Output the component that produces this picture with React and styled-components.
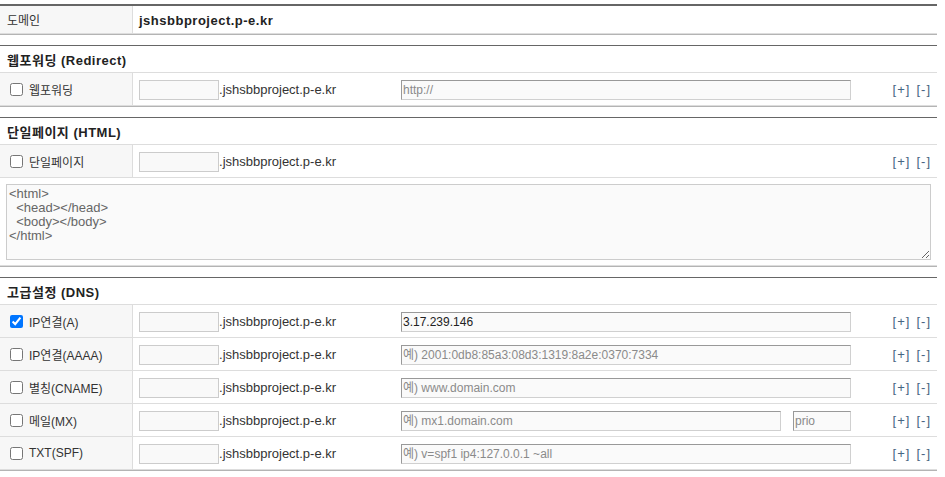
import React from "react";
import styled, { createGlobalStyle } from "styled-components";

const GlobalStyle = createGlobalStyle`
  html, body {
    margin: 0;
    padding: 0;
    background: #fff;
  }
  body {
    font-family: "Liberation Sans", "Noto Sans CJK KR", sans-serif;
    font-size: 12px;
    color: #333;
  }
`;

const Page = styled.div`
  width: 937px;
  padding-top: 4px;
`;

const Section = styled.div`
  border-top: ${(p) => (p.$thick ? "2px" : "1px")} solid #666;
  border-bottom: 1px solid #b4b4b4;
  margin-bottom: 10px;
`;

const SectionHeader = styled.div`
  height: 26px;
  display: flex;
  align-items: center;
  padding-left: 7px;
  border-bottom: 1px solid #ddd;
  font-size: 13px;
  font-weight: bold;
  letter-spacing: 0.5px;
  color: #222;
`;

const Row = styled.div`
  display: grid;
  grid-template-columns: 133px 1fr;
  height: ${(p) => p.$height || 32}px;
  border-bottom: 1px solid #ddd;
`;

const LabelCell = styled.label`
  display: flex;
  align-items: center;
  padding-left: ${(p) => (p.$plain ? 7 : 0)}px;
  background: #f7f7f7;
  border-right: 1px solid #ddd;
  font-size: 12px;
  color: #333;
`;

const Check = styled.input.attrs({ type: "checkbox" })`
  width: 13px;
  height: 13px;
  margin: 0 6px 0 10px;
`;

const ValueCell = styled.div`
  display: flex;
  align-items: center;
  padding: 1px 6px 0 6px;
`;

const DomainText = styled.span`
  font-size: 13px;
  font-weight: bold;
  letter-spacing: 0.5px;
  color: #222;
`;

const SubGroup = styled.div`
  display: flex;
  align-items: center;
  width: 262px;
  flex-shrink: 0;
`;

const SubInput = styled.input`
  box-sizing: border-box;
  width: 80px;
  height: 20px;
  padding: 0 2px;
  border: 1px solid #ccc;
  background: #f9f9f9;
  font-family: inherit;
  font-size: 12px;
  outline: none;
`;

const Suffix = styled.span`
  font-size: 13px;
  color: #333;
`;

const Field = styled.input`
  box-sizing: border-box;
  width: ${(p) => p.$width}px;
  height: 20px;
  padding: 0 1px;
  margin-right: ${(p) => p.$gap || 0}px;
  border: 1px solid;
  border-color: #999 #d0d0d0 #d0d0d0 #999;
  background: #fafafa;
  font-family: "Liberation Sans", "Noto Sans CJK KR", sans-serif;
  font-size: 12px;
  color: #222;
  outline: none;

  &::placeholder {
    color: #8a8a8a;
  }
`;

const Actions = styled.div`
  margin-left: auto;
  display: flex;
  gap: 6px;
`;

const ActionLink = styled.span`
  font-size: 13px;
  letter-spacing: 1px;
  color: #476582;
  cursor: pointer;
`;

const EditorCell = styled.div`
  padding: 6px;
  height: 88px;
  box-sizing: border-box;
  border-bottom: 1px solid #ddd;
`;

const CodeArea = styled.textarea`
  display: block;
  box-sizing: border-box;
  width: 100%;
  height: 76px;
  margin: 0;
  padding: 2px 2px;
  border: 1px solid #ccc;
  background: #fafafa;
  font-family: "Liberation Sans", sans-serif;
  font-size: 13px;
  line-height: 14px;
  color: #666;
  outline: none;
  resize: vertical;
`;

const DOMAIN = "jshsbbproject.p-e.kr";

const dnsRows = [
  { label: "IP연결(A)", checked: true, value: "3.17.239.146" },
  { label: "IP연결(AAAA)", placeholder: "예) 2001:0db8:85a3:08d3:1319:8a2e:0370:7334" },
  { label: "별칭(CNAME)", placeholder: "예) www.domain.com" },
  { label: "메일(MX)", placeholder: "예) mx1.domain.com", prio: true },
  { label: "TXT(SPF)", placeholder: "예) v=spf1 ip4:127.0.0.1 ~all" },
];

const RowActions = () => (
  <Actions>
    <ActionLink>[+]</ActionLink>
    <ActionLink>[-]</ActionLink>
  </Actions>
);

const Subdomain = () => (
  <SubGroup>
    <SubInput />
    <Suffix>.{DOMAIN}</Suffix>
  </SubGroup>
);

const RecordRow = ({ label, checked, value, placeholder, prio, noTarget }) => (
  <Row>
    <LabelCell>
      <Check defaultChecked={checked} />
      {label}
    </LabelCell>
    <ValueCell>
      <Subdomain />
      {!noTarget &&
        (prio ? (
          <>
            <Field $width={380} $gap={12} placeholder={placeholder} />
            <Field $width={58} placeholder="prio" />
          </>
        ) : (
          <Field $width={450} defaultValue={value} placeholder={placeholder} />
        ))}
      <RowActions />
    </ValueCell>
  </Row>
);

const App = () => (
  <Page>
    <GlobalStyle />

    <Section $thick>
      <Row $height={27}>
        <LabelCell $plain>도메인</LabelCell>
        <ValueCell>
          <DomainText>{DOMAIN}</DomainText>
        </ValueCell>
      </Row>
    </Section>

    <Section>
      <SectionHeader>웹포워딩 (Redirect)</SectionHeader>
      <RecordRow label="웹포워딩" placeholder="http://" />
    </Section>

    <Section>
      <SectionHeader>단일페이지 (HTML)</SectionHeader>
      <RecordRow label="단일페이지" noTarget />
      <EditorCell>
        <CodeArea
          defaultValue={"<html>\n  <head></head>\n  <body></body>\n</html>"}
        />
      </EditorCell>
    </Section>

    <Section>
      <SectionHeader>고급설정 (DNS)</SectionHeader>
      {dnsRows.map((r) => (
        <RecordRow key={r.label} {...r} />
      ))}
    </Section>
  </Page>
);

export default App;
